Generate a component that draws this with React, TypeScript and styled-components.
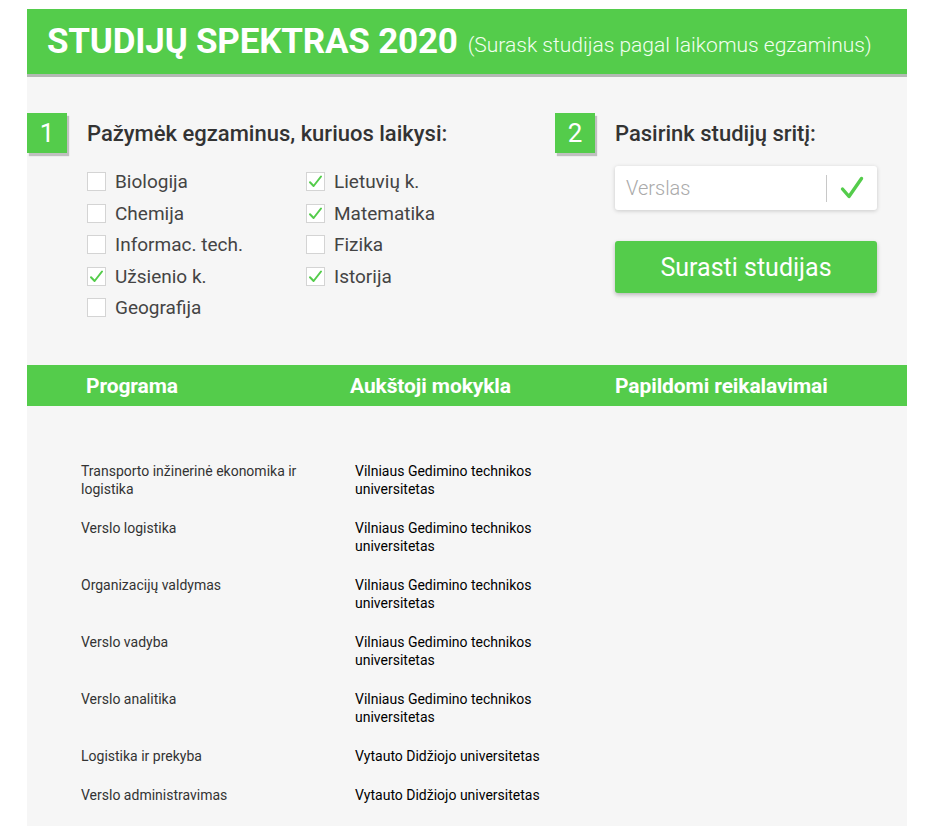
import styled, { createGlobalStyle } from 'styled-components';

const GREEN = '#54cc4b';

const GlobalStyle = createGlobalStyle`
    html, body {
        margin: 0;
        padding: 0;
        background: #fff;
    }
    body {
        font-family: Roboto, 'Noto Sans', 'Liberation Sans', sans-serif;
    }
`;

const Page = styled.div`
    width: 880px;
    margin: 9px 0 0 27px;
    min-height: calc(100vh - 9px);
    background: #f6f6f6;
    display: flex;
    flex-direction: column;
`;

const Header = styled.header`
    height: 65px;
    background: ${GREEN};
    box-shadow: 0 3px 0 #b4b9b4;
    display: flex;
    align-items: center;
    padding-left: 20px;
    gap: 10px;
    color: #fff;
`;

const Title = styled.h1`
    margin: 0;
    font-size: 35px;
    font-weight: 700;
    letter-spacing: -0.2px;
`;

const Subtitle = styled.span`
    font-size: 21px;
    font-weight: 300;
    color: #f2fff0;
    padding-top: 6px;
`;

const Steps = styled.section`
    display: flex;
    padding-top: 39px;
    height: 255px;
    box-sizing: border-box;
`;

const Step = styled.div<{ width: number }>`
    width: ${({ width }) => width}px;
    display: flex;
    flex-direction: column;
`;

const StepHead = styled.div`
    display: flex;
    align-items: center;
    gap: 20px;
    height: 40px;
`;

const Badge = styled.div`
    width: 40px;
    height: 40px;
    background: ${GREEN};
    color: #fff;
    font-size: 26px;
    display: flex;
    align-items: center;
    justify-content: center;
    box-shadow: 2px 3px 1px rgba(0, 0, 0, 0.22);
`;

const StepTitle = styled.h2`
    margin: 0;
    font-size: 22px;
    font-weight: 500;
    color: #333;
`;

const StepBody = styled.div`
    padding-left: 60px;
    margin-top: 13px;
`;

const ExamGrid = styled.div`
    display: grid;
    grid-template-columns: 219px 219px;
    grid-auto-flow: column;
    grid-template-rows: repeat(5, 31.5px);
`;

const ExamItem = styled.label`
    display: flex;
    align-items: center;
    gap: 9px;
    font-size: 19px;
    color: #444;
`;

const Box = styled.span`
    width: 17px;
    height: 17px;
    background: #fff;
    border: 1px solid #d4d4d4;
    display: flex;
    align-items: center;
    justify-content: center;
`;

const Select = styled.div`
    width: 262px;
    height: 44px;
    background: #fff;
    border-radius: 3px;
    box-shadow: 0 1px 4px rgba(0, 0, 0, 0.18);
    display: flex;
    align-items: center;
    box-sizing: border-box;
    padding-left: 11px;
`;

const SelectValue = styled.span`
    flex: 1;
    font-size: 20px;
    font-weight: 300;
    color: #aaa;
`;

const Divider = styled.span`
    width: 1px;
    height: 27px;
    background: #c8c8c8;
`;

const SelectIcon = styled.span`
    width: 50px;
    display: flex;
    justify-content: center;
`;

const SearchButton = styled.button`
    margin-top: 31px;
    width: 262px;
    height: 52px;
    border: none;
    border-radius: 3px;
    background: ${GREEN};
    color: #fff;
    font-family: inherit;
    font-size: 25px;
    box-shadow: 0 2px 4px rgba(0, 0, 0, 0.25);
`;

const TableHead = styled.div`
    margin-top: 36px;
    height: 41px;
    background: ${GREEN};
    display: grid;
    grid-template-columns: 264px 265px 1fr;
    align-items: center;
    padding-left: 59px;
`;

const HeadCell = styled.div`
    color: #fff;
    font-size: 21px;
    font-weight: 700;
    letter-spacing: -0.1px;
`;

const TableBody = styled.div`
    padding: 56px 0 12px 54px;
`;

const Row = styled.div`
    display: grid;
    grid-template-columns: 274px 1fr;
    padding-bottom: 21px;
    font-size: 14px;
    line-height: 18px;
`;

const Cell = styled.div<{ strong?: boolean }>`
    max-width: ${({ strong }) => (strong ? 220 : 240)}px;
    color: ${({ strong }) => (strong ? '#000' : '#333')};
    font-weight: 400;
`;

const SmallCheck = () => (
    <svg width="15" height="15" viewBox="0 0 15 15">
        <path d="M2 8.2 L5.6 12 L13 2.5" fill="none" stroke={GREEN} strokeWidth="2" strokeLinecap="round" strokeLinejoin="round" />
    </svg>
);

const BigCheck = () => (
    <svg width="24" height="24" viewBox="0 0 24 24">
        <path d="M2.5 13 L9 20.5 L21.5 2.5" fill="none" stroke={GREEN} strokeWidth="3.4" strokeLinecap="round" strokeLinejoin="round" />
    </svg>
);

const exams = [
    { name: 'Biologija', checked: false },
    { name: 'Chemija', checked: false },
    { name: 'Informac. tech.', checked: false },
    { name: 'Užsienio k.', checked: true },
    { name: 'Geografija', checked: false },
    { name: 'Lietuvių k.', checked: true },
    { name: 'Matematika', checked: true },
    { name: 'Fizika', checked: false },
    { name: 'Istorija', checked: true },
];

const VGTU = 'Vilniaus Gedimino technikos universitetas';
const VDU = 'Vytauto Didžiojo universitetas';

const programs = [
    { name: 'Transporto inžinerinė ekonomika ir logistika', school: VGTU },
    { name: 'Verslo logistika', school: VGTU },
    { name: 'Organizacijų valdymas', school: VGTU },
    { name: 'Verslo vadyba', school: VGTU },
    { name: 'Verslo analitika', school: VGTU },
    { name: 'Logistika ir prekyba', school: VDU },
    { name: 'Verslo administravimas', school: VDU },
];

export default function App() {
    return (
        <>
            <GlobalStyle />
            <Page>
                <Header>
                    <Title>STUDIJŲ SPEKTRAS 2020</Title>
                    <Subtitle>(Surask studijas pagal laikomus egzaminus)</Subtitle>
                </Header>

                <Steps>
                    <Step width={528}>
                        <StepHead>
                            <Badge>1</Badge>
                            <StepTitle>Pažymėk egzaminus, kuriuos laikysi:</StepTitle>
                        </StepHead>
                        <StepBody>
                            <ExamGrid>
                                {exams.map((exam) => (
                                    <ExamItem key={exam.name}>
                                        <Box>{exam.checked && <SmallCheck />}</Box>
                                        {exam.name}
                                    </ExamItem>
                                ))}
                            </ExamGrid>
                        </StepBody>
                    </Step>
                    <Step width={352}>
                        <StepHead>
                            <Badge>2</Badge>
                            <StepTitle>Pasirink studijų sritį:</StepTitle>
                        </StepHead>
                        <StepBody>
                            <Select>
                                <SelectValue>Verslas</SelectValue>
                                <Divider />
                                <SelectIcon>
                                    <BigCheck />
                                </SelectIcon>
                            </Select>
                            <SearchButton>Surasti studijas</SearchButton>
                        </StepBody>
                    </Step>
                </Steps>

                <TableHead>
                    <HeadCell>Programa</HeadCell>
                    <HeadCell>Aukštoji mokykla</HeadCell>
                    <HeadCell>Papildomi reikalavimai</HeadCell>
                </TableHead>
                <TableBody>
                    {programs.map((p) => (
                        <Row key={p.name}>
                            <Cell>{p.name}</Cell>
                            <Cell strong>{p.school}</Cell>
                        </Row>
                    ))}
                </TableBody>
            </Page>
        </>
    );
}
